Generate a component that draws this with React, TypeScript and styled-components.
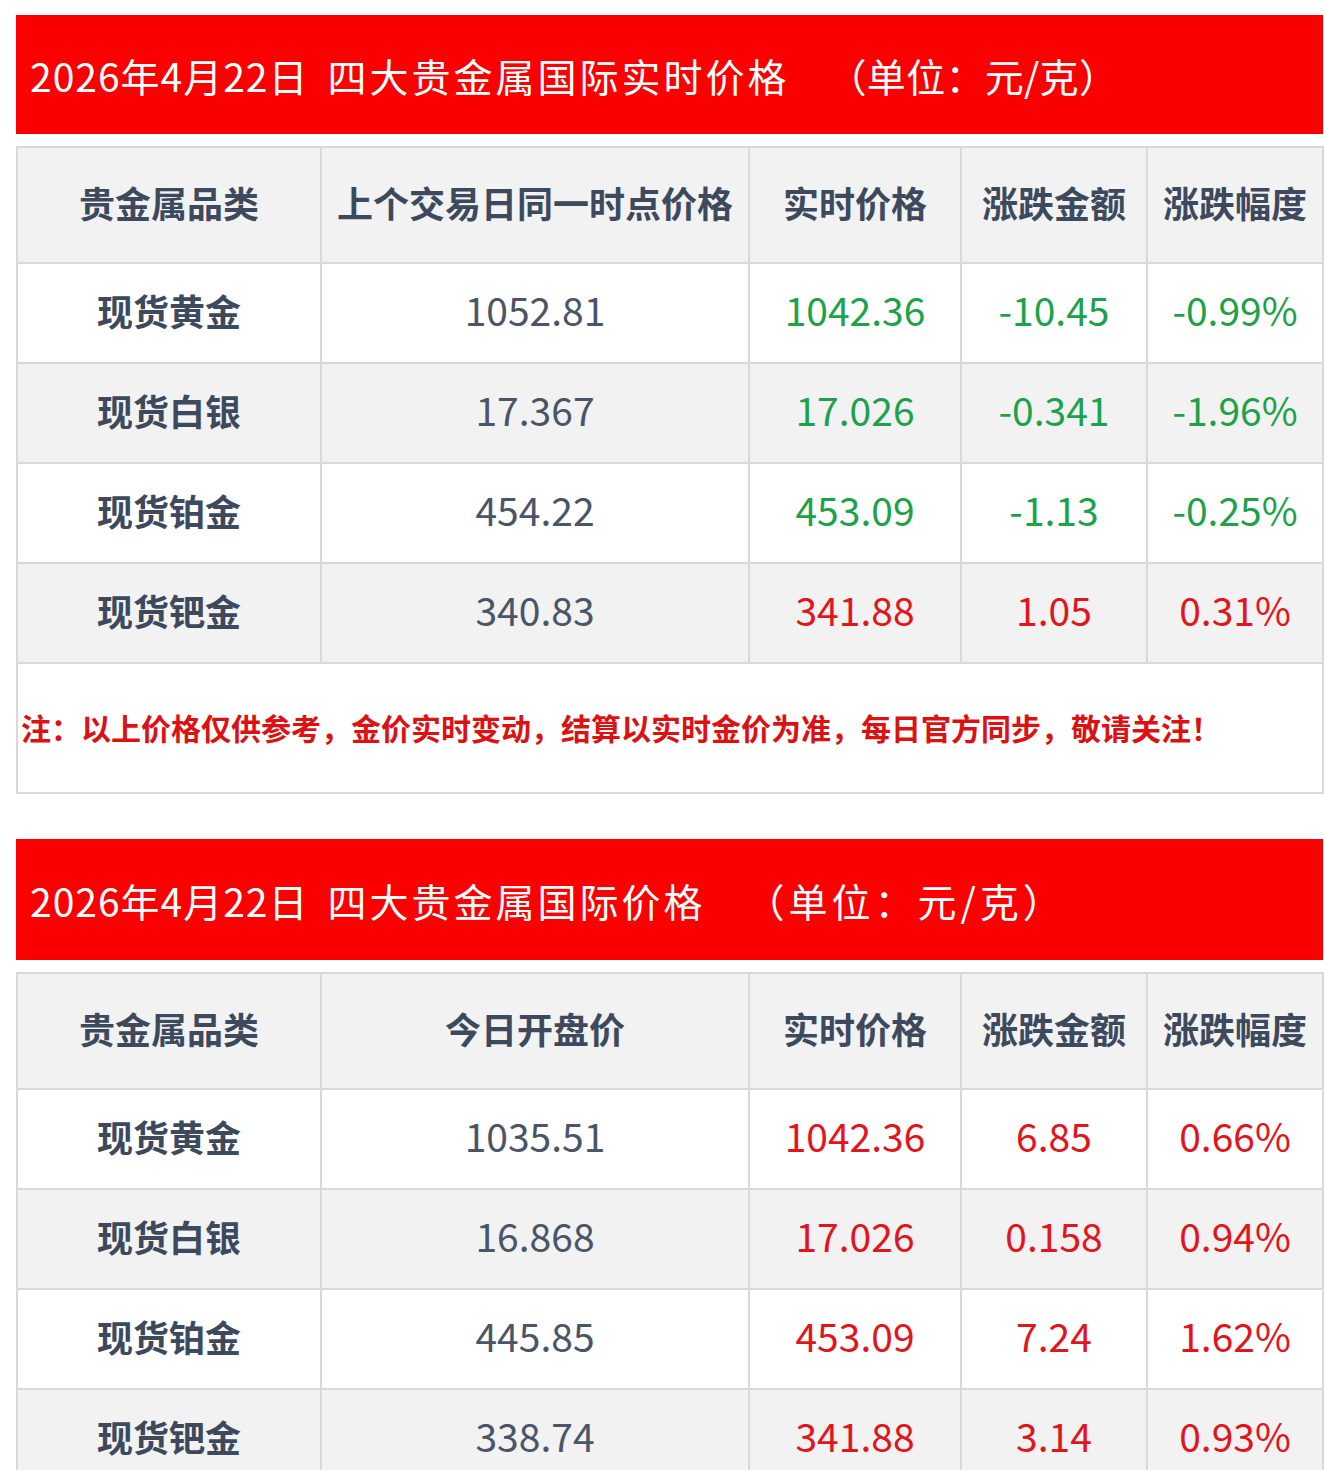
import React from "react";
import styled, { createGlobalStyle } from "styled-components";

const Global = createGlobalStyle`
  html, body { margin: 0; padding: 0; background: #ffffff; }
  body { font-family: "Noto Sans CJK SC", "Noto Sans", sans-serif; }
`;

const Page = styled.div`
  width: 1324px;
  padding: 15px 1px 0 16px;
  box-sizing: border-box;
  display: flex;
  flex-direction: column;
`;

const Section = styled.section<{ $gap?: number }>`
  display: flex;
  flex-direction: column;
  gap: 12px;
  margin-bottom: ${(p) => p.$gap ?? 0}px;
`;

const Banner = styled.div<{ $h: number }>`
  height: ${(p) => p.$h}px;
  background: #fb0000;
  color: #ffffff;
  display: flex;
  align-items: center;
  padding-left: 14px;
  font-family: "Noto Sans CJK SC", sans-serif;
  font-size: 39px;
  font-weight: 400;
  white-space: pre;
`;

const DatePart = styled.span`
  letter-spacing: 1px;
`;

const TitlePart = styled.span`
  margin-left: 19px;
  letter-spacing: 3px;
`;

const UnitPart = styled.span<{ $ls: number; $gap: number }>`
  margin-left: ${(p) => p.$gap}px;
  letter-spacing: ${(p) => p.$ls}px;
`;

const Table = styled.table`
  width: 1306px;
  border-collapse: collapse;
  table-layout: fixed;
  border: 2px solid #d9d9d9;
`;

const HeadCell = styled.th`
  height: 108px;
  background: #f2f2f2;
  border: 2px solid #d9d9d9;
  color: #3d4a5d;
  font-family: "Noto Sans CJK SC", sans-serif;
  font-weight: 700;
  font-size: 36px;
  text-align: center;
  padding: 0 0 6px;
  white-space: nowrap;
`;

const Row = styled.tr<{ $alt: boolean }>`
  height: 100px;
  background: ${(p) => (p.$alt ? "#f2f2f2" : "#ffffff")};
`;

const NameCell = styled.td`
  border: 2px solid #d9d9d9;
  color: #3d4a5d;
  font-family: "Noto Sans CJK SC", sans-serif;
  font-weight: 700;
  font-size: 36px;
  text-align: center;
  padding: 0 0 6px;
`;

const NumCell = styled.td<{ $tone: "base" | "up" | "down" }>`
  border: 2px solid #d9d9d9;
  color: ${(p) => (p.$tone === "up" ? "#e3151c" : p.$tone === "down" ? "#1da24a" : "#4a5568")};
  font-family: "Noto Sans CJK SC", sans-serif;
  font-weight: 400;
  font-size: 39px;
  text-align: center;
  padding: 0 0 9px;
`;

const NoteCell = styled.td`
  height: 126px;
  border: 2px solid #d9d9d9;
  background: #ffffff;
  color: #dd1111;
  font-family: "Noto Sans CJK SC", sans-serif;
  font-weight: 700;
  font-size: 30px;
  text-align: left;
  padding: 0 0 2px 3px;
  white-space: nowrap;
`;

type Tone = "base" | "up" | "down";
interface Item {
  name: string;
  prev: string;
  now: string;
  diff: string;
  pct: string;
  tone: Tone;
}

const cols = [304, 428, 212, 186, 176];

const table1: Item[] = [
  { name: "现货黄金", prev: "1052.81", now: "1042.36", diff: "-10.45", pct: "-0.99%", tone: "down" },
  { name: "现货白银", prev: "17.367", now: "17.026", diff: "-0.341", pct: "-1.96%", tone: "down" },
  { name: "现货铂金", prev: "454.22", now: "453.09", diff: "-1.13", pct: "-0.25%", tone: "down" },
  { name: "现货钯金", prev: "340.83", now: "341.88", diff: "1.05", pct: "0.31%", tone: "up" },
];

const table2: Item[] = [
  { name: "现货黄金", prev: "1035.51", now: "1042.36", diff: "6.85", pct: "0.66%", tone: "up" },
  { name: "现货白银", prev: "16.868", now: "17.026", diff: "0.158", pct: "0.94%", tone: "up" },
  { name: "现货铂金", prev: "445.85", now: "453.09", diff: "7.24", pct: "1.62%", tone: "up" },
  { name: "现货钯金", prev: "338.74", now: "341.88", diff: "3.14", pct: "0.93%", tone: "up" },
];

function PriceTable({ second, rows, note }: { second: string; rows: Item[]; note?: string }) {
  return (
    <Table>
      <colgroup>
        {cols.map((w, i) => (
          <col key={i} style={{ width: w }} />
        ))}
      </colgroup>
      <thead>
        <tr>
          <HeadCell>贵金属品类</HeadCell>
          <HeadCell>{second}</HeadCell>
          <HeadCell>实时价格</HeadCell>
          <HeadCell>涨跌金额</HeadCell>
          <HeadCell>涨跌幅度</HeadCell>
        </tr>
      </thead>
      <tbody>
        {rows.map((r, i) => (
          <Row key={r.name} $alt={i % 2 === 1}>
            <NameCell>{r.name}</NameCell>
            <NumCell $tone="base">{r.prev}</NumCell>
            <NumCell $tone={r.tone}>{r.now}</NumCell>
            <NumCell $tone={r.tone}>{r.diff}</NumCell>
            <NumCell $tone={r.tone}>{r.pct}</NumCell>
          </Row>
        ))}
        {note && (
          <tr>
            <NoteCell colSpan={5}>{note}</NoteCell>
          </tr>
        )}
      </tbody>
    </Table>
  );
}

function TitleBanner({ h, title, unitLs, unitGap }: { h: number; title: string; unitLs: number; unitGap: number }) {
  return (
    <Banner $h={h}>
      <DatePart>2026年4月22日</DatePart>
      <TitlePart>{title}</TitlePart>
      <UnitPart $ls={unitLs} $gap={unitGap}>（单位：元/克）</UnitPart>
    </Banner>
  );
}

export default function App() {
  return (
    <>
      <Global />
      <Page>
        <Section $gap={45}>
          <TitleBanner h={119} title="四大贵金属国际实时价格" unitLs={0.3} unitGap={38} />
          <PriceTable
            second="上个交易日同一时点价格"
            rows={table1}
            note="注：以上价格仅供参考，金价实时变动，结算以实时金价为准，每日官方同步，敬请关注！"
          />
        </Section>
        <Section>
          <TitleBanner h={121} title="四大贵金属国际价格" unitLs={4} unitGap={40} />
          <PriceTable second="今日开盘价" rows={table2} />
        </Section>
      </Page>
    </>
  );
}
